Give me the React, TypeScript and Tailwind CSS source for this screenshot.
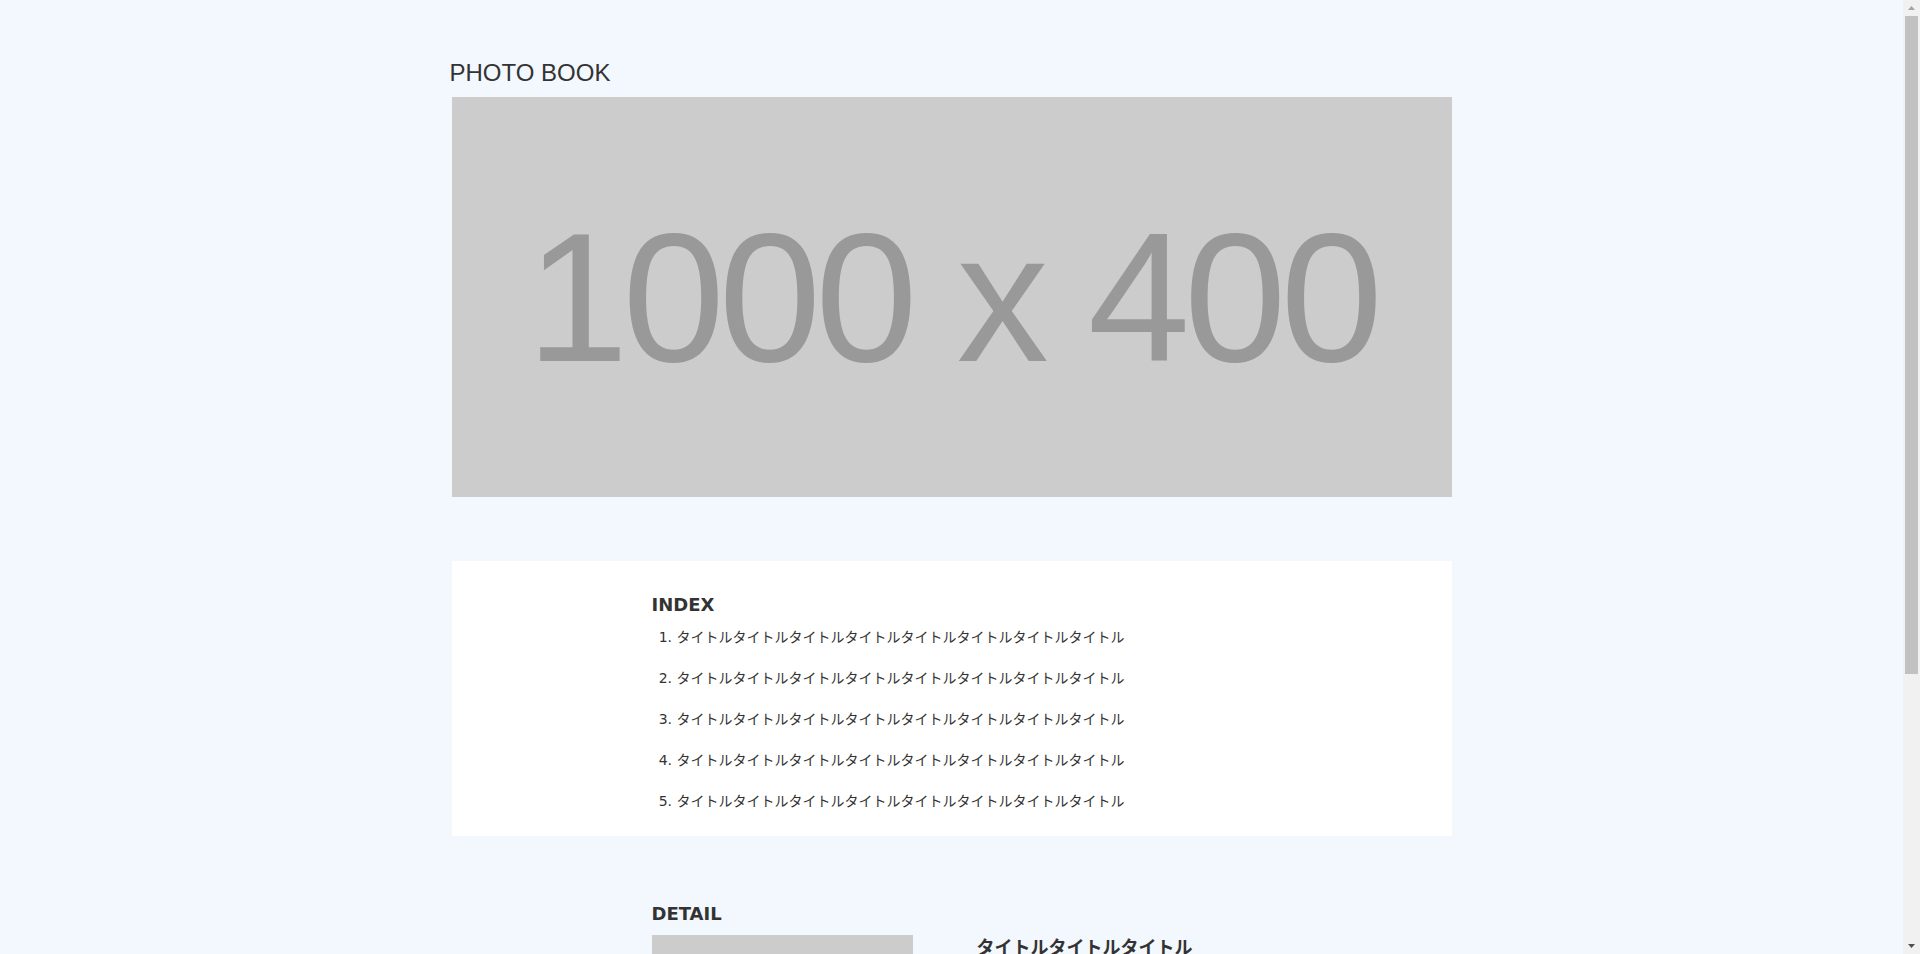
const items = [1, 2, 3, 4, 5];
const title = "タイトル".repeat(8);

function ScrollGutter() {
  return (
    <aside className="flex h-screen w-[17px] shrink-0 flex-col items-center bg-[#f1f1f1]">
      <div className="flex h-4 w-full items-center justify-center">
        <svg width="7" height="4" viewBox="0 0 7 4">
          <path d="M3.5 0 L7 4 L0 4 Z" fill="#a3a3a3" />
        </svg>
      </div>
      <div className="h-[658px] w-[13px] bg-[#c1c1c1]" />
      <div className="flex-1" />
      <div className="flex h-4 w-full items-center justify-center">
        <svg width="7" height="4" viewBox="0 0 7 4">
          <path d="M0 0 L7 0 L3.5 4 Z" fill="#505050" />
        </svg>
      </div>
    </aside>
  );
}

export default function App() {
  return (
    <div className="flex h-screen overflow-hidden bg-[#f3f8fe] text-[#333]">
      <main className="h-screen flex-1 overflow-y-auto">
        <div className="mx-auto w-[1000px] pt-[61px] pb-[203px]">
          {/* Header */}
          <h1 className="-ml-[2px] font-['Liberation_Sans',sans-serif] text-[24px] leading-6">
            PHOTO BOOK
          </h1>

          {/* Hero placeholder */}
          <div className="mt-[12px] flex h-[400px] items-center justify-center overflow-hidden bg-[#cccccc]">
            <span className="font-['Liberation_Sans',sans-serif] text-[184px] leading-none tracking-[-6px] text-[#999999]">
              1000 x 400
            </span>
          </div>

          {/* Index */}
          <section className="mt-16 bg-white pt-[30px] pb-[24px]">
            <div className="mx-auto w-[600px]">
              <h2 className="font-['DejaVu_Sans',sans-serif] text-[18px] leading-[27px] font-bold">INDEX</h2>
              <ol className="mt-[9px] list-decimal space-y-5 pl-[25px] font-['DejaVu_Sans','Noto_Sans_CJK_JP',sans-serif] text-[14px] leading-[21px]">
                {items.map((n) => (
                  <li key={n}>{title}</li>
                ))}
              </ol>
            </div>
          </section>

          {/* Detail */}
          <section className="mt-16">
            <div className="mx-auto w-[600px]">
              <h2 className="font-['DejaVu_Sans',sans-serif] text-[18px] leading-[27px] font-bold">DETAIL</h2>
              <div className="mt-2 flex gap-16">
                <div className="h-[196px] w-[261px] shrink-0 bg-[#cccccc]" />
                <div className="font-['DejaVu_Sans','Noto_Sans_CJK_JP',sans-serif]">
                  <h3 className="text-[18px] leading-[26px] font-bold">タイトルタイトルタイトル</h3>
                  <p className="mt-3 text-[14px] leading-[21px]">
                    テキストテキストテキストテキストテキストテキストテキストテキスト
                  </p>
                </div>
              </div>
            </div>
          </section>
        </div>
      </main>
      <ScrollGutter />
    </div>
  );
}
